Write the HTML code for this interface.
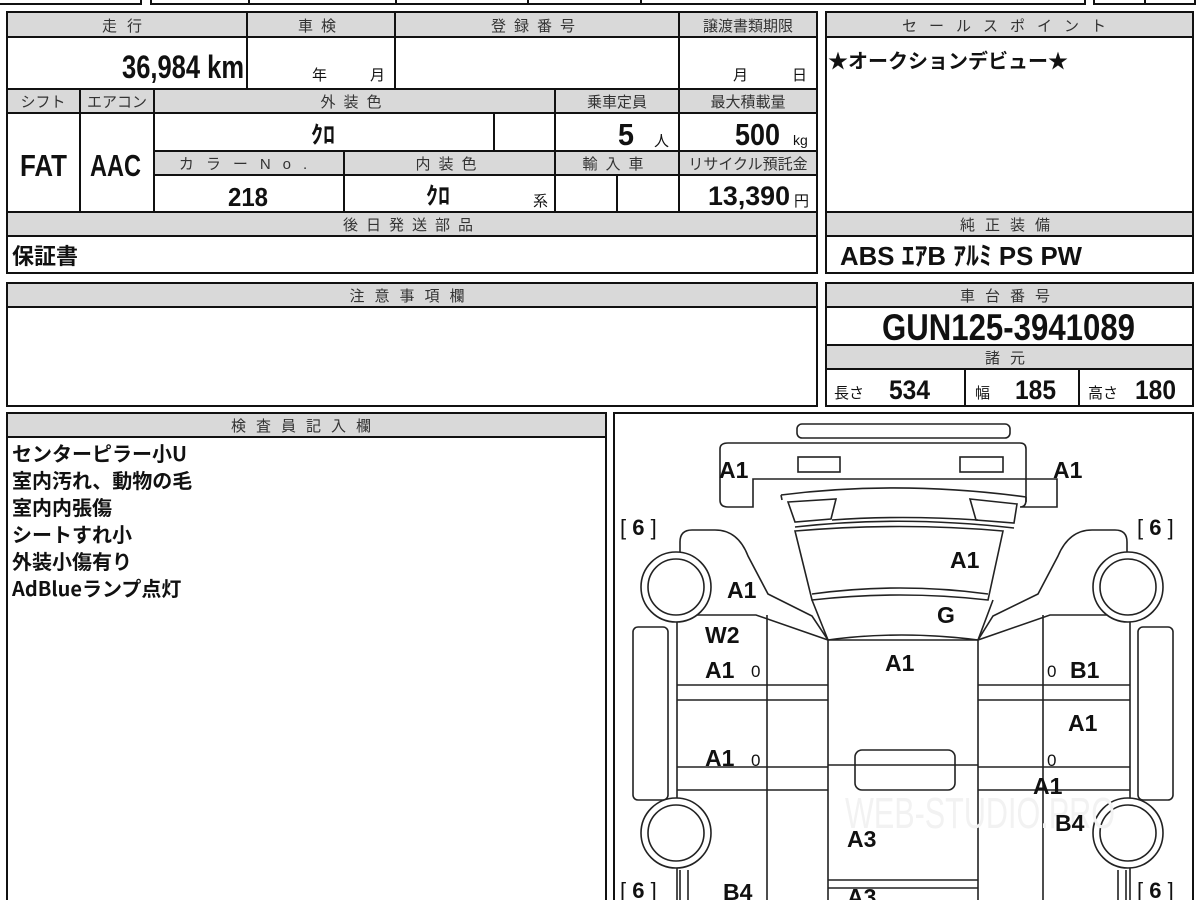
<!DOCTYPE html>
<html><head><meta charset="utf-8"><style>
html,body{margin:0;padding:0;background:#fff;width:1200px;height:900px;overflow:hidden}
svg{display:block}
text{font-family:"Liberation Sans","Noto Sans CJK JP",sans-serif;fill:#111}
.h{font-size:15px;fill:#333;text-anchor:middle;letter-spacing:5px}
.b{font-weight:bold}
.c{text-anchor:middle}
.r{text-anchor:end}
.jp{font-family:"Noto Sans CJK JP",sans-serif}
</style></head><body>
<svg width="1200" height="900" viewBox="0 0 1200 900" xmlns="http://www.w3.org/2000/svg">
<defs><clipPath id="dg"><rect x="615" y="414" width="577" height="486"/></clipPath></defs>
<g fill="none" stroke="#111" stroke-width="2">
<path d="M0 4H141V-2M151 -2V4H1085V-2M249 4V-2M396 4V-2M528 4V-2M641 4V-2M1094 -2V4H1195V-2M1145 4V-2"/>
</g>
<g fill="#d9d9d9">
<rect x="7" y="12" width="810" height="25"/>
<rect x="7" y="89" width="810" height="24"/>
<rect x="154" y="151" width="663" height="24"/>
<rect x="7" y="212" width="810" height="24"/>
<rect x="826" y="12" width="367" height="25"/>
<rect x="826" y="212" width="367" height="24"/>
<rect x="826" y="283" width="367" height="24"/>
<rect x="826" y="345" width="367" height="24"/>
<rect x="7" y="283" width="810" height="24"/>
<rect x="7" y="413" width="599" height="24"/>
</g>
<g fill="none" stroke="#111" stroke-width="2">
<rect x="7" y="12" width="810" height="261"/>
<path d="M7 37H817M7 89H817M7 113H817M154 151H817M154 175H817M7 212H817M7 236H817"/>
<path d="M247 12V89M395 12V89M679 12V212M80 89V212M154 89V212M555 89V212M494 113V151M344 151V212M617 175V212"/>
<rect x="826" y="12" width="367" height="261"/>
<path d="M826 37H1193M826 212H1193M826 236H1193"/>
<rect x="826" y="283" width="367" height="123"/>
<path d="M826 307H1193M826 345H1193M826 369H1193M965 369V406M1079 369V406"/>
<rect x="7" y="283" width="810" height="123"/>
<path d="M7 307H817"/>
<rect x="7" y="413" width="599" height="500"/>
<path d="M7 437H606"/>
<rect x="614" y="413" width="579" height="500"/>
</g>
<text class="h" x="127" y="31" style="letter-spacing:10px">走行</text>
<text class="h" x="321" y="31" style="letter-spacing:8px">車検</text>
<text class="h" x="537" y="31" style="letter-spacing:8px">登録番号</text>
<text class="h" x="748" y="31" style="letter-spacing:0">譲渡書類期限</text>
<text class="h" x="43" y="107" style="letter-spacing:0">シフト</text>
<text class="h" x="117" y="107" style="letter-spacing:0">エアコン</text>
<text class="h" x="355" y="107" style="letter-spacing:8px">外装色</text>
<text class="h" x="617" y="107" style="letter-spacing:0">乗車定員</text>
<text class="h" x="748" y="107" style="letter-spacing:0">最大積載量</text>
<text class="h" x="249" y="169" style="letter-spacing:12px">カラーNo.</text>
<text class="h" x="450" y="169" style="letter-spacing:8px">内装色</text>
<text class="h" x="617" y="169" style="letter-spacing:8px">輸入車</text>
<text class="h" x="748" y="169" style="letter-spacing:0">リサイクル預託金</text>
<text class="h" x="412" y="230" style="letter-spacing:8px">後日発送部品</text>
<text class="h" x="1010" y="31" style="letter-spacing:12px">セールスポイント</text>
<text class="h" x="1010" y="230" style="letter-spacing:10px">純正装備</text>
<text class="h" x="1010" y="301" style="letter-spacing:10px">車台番号</text>
<text class="h" x="1010" y="363" style="letter-spacing:10px">諸元</text>
<text class="h" x="412" y="301" style="letter-spacing:10px">注意事項欄</text>
<text class="h" x="306" y="431" style="letter-spacing:10px">検査員記入欄</text>
<text class="b" x="122" y="78" style="font-size:32px" textLength="122" lengthAdjust="spacingAndGlyphs">36,984 km</text>
<text x="312" y="80" style="font-size:15px">年</text>
<text x="370" y="80" style="font-size:15px">月</text>
<text x="733" y="80" style="font-size:15px">月</text>
<text x="792" y="80" style="font-size:15px">日</text>
<text class="b" x="20" y="176" style="font-size:31px" textLength="47" lengthAdjust="spacingAndGlyphs">FAT</text>
<text class="b" x="90" y="176" style="font-size:31px" textLength="51" lengthAdjust="spacingAndGlyphs">AAC</text>
<text class="b c" x="323" y="143" style="font-size:24px">ｸﾛ</text>
<text class="b" x="618" y="145" style="font-size:31px" textLength="16" lengthAdjust="spacingAndGlyphs">5</text>
<text x="654" y="146" style="font-size:15px">人</text>
<text class="b" x="735" y="145" style="font-size:31px" textLength="45" lengthAdjust="spacingAndGlyphs">500</text>
<text x="793" y="145" style="font-size:14px">kg</text>
<text class="b" x="228" y="206" style="font-size:26px" textLength="40" lengthAdjust="spacingAndGlyphs">218</text>
<text class="b c" x="438" y="204" style="font-size:24px">ｸﾛ</text>
<text x="533" y="206" style="font-size:15px">系</text>
<text class="b" x="708" y="205" style="font-size:27px" textLength="82" lengthAdjust="spacingAndGlyphs">13,390</text>
<text x="794" y="206" style="font-size:15px">円</text>
<text class="b jp" x="12" y="264" style="font-size:22px">保証書</text>
<text class="b jp" x="828" y="68" style="font-size:20px">★オークションデビュー★</text>
<text class="b" x="840" y="265" style="font-size:26px" textLength="242" lengthAdjust="spacingAndGlyphs">ABS  ｴｱB  ｱﾙﾐ  PS  PW</text>
<text class="b" x="882" y="340" style="font-size:37px" textLength="253" lengthAdjust="spacingAndGlyphs">GUN125-3941089</text>
<text x="834" y="398" style="font-size:15px">長さ</text>
<text class="b" x="889" y="399" style="font-size:27px" textLength="41" lengthAdjust="spacingAndGlyphs">534</text>
<text x="975" y="398" style="font-size:15px">幅</text>
<text class="b" x="1015" y="399" style="font-size:27px" textLength="41" lengthAdjust="spacingAndGlyphs">185</text>
<text x="1088" y="398" style="font-size:15px">高さ</text>
<text class="b" x="1135" y="399" style="font-size:27px" textLength="41" lengthAdjust="spacingAndGlyphs">180</text>
<text class="jp b" x="12" y="461" style="font-size:20px">センターピラー小U</text>
<text class="jp b" x="12" y="488" style="font-size:20px">室内汚れ、動物の毛</text>
<text class="jp b" x="12" y="515" style="font-size:20px">室内内張傷</text>
<text class="jp b" x="12" y="542" style="font-size:20px">シートすれ小</text>
<text class="jp b" x="12" y="569" style="font-size:20px">外装小傷有り</text>
<text class="jp b" x="12" y="596" style="font-size:20px">AdBlueランプ点灯</text>
<g clip-path="url(#dg)">
<g fill="none" stroke="#222" stroke-width="1.6">
<rect x="797" y="424" width="213" height="14" rx="5"/>
<path d="M728 443H1020Q1026 443 1026 449V500Q1026 507 1020 507H1057V479H753V507H728Q720 507 720 500V449Q720 443 728 443Z"/>
<rect x="798" y="457" width="42" height="15"/><rect x="960" y="457" width="43" height="15"/>
<path d="M781 495Q900 480 1026 497M782 500L781 495M1026 497V502"/>
<path d="M788 502L836 499L831 519L795 522ZM970 499L1017 504L1014 523L976 520Z"/>
<path d="M832 520Q900 515 978 520M795 527Q900 515 1014 528"/>
<path d="M795 531Q900 522 1003 531L988 600Q900 590 812 600Z"/>
<path d="M812 594Q900 582 988 594"/>
<path d="M812 600L828 640H978L993 600"/>
<path d="M828 640Q900 630 978 640"/>
<path d="M828 640V900M978 640V900"/>
<path d="M680 573V542Q680 530 692 530H715Q738 530 748 556L768 594L812 616L828 640"/>
<path d="M1127 573V542Q1127 530 1115 530H1092Q1069 530 1058 556L1038 594L993 616L978 640"/>
<path d="M677 615H756L828 640M1130 615H1050L978 640"/>
<path d="M677 615V900M767 615V900M1130 615V900M1043 615V900"/>
<path d="M677 685H828M677 700H828M677 767H828M677 790H828M978 685H1130M978 700H1130M978 767H1130M978 790H1130"/>
<path d="M828 765H978M828 880H978M828 888H978"/>
<rect x="855" y="750" width="100" height="40" rx="7"/>
<rect x="633" y="627" width="35" height="173" rx="5" fill="#fff"/>
<rect x="1138" y="627" width="35" height="173" rx="5" fill="#fff"/>
<path d="M680 870V900M688 870V900M1118 870V900M1126 870V900"/>
</g>
<g fill="#fff" stroke="#222" stroke-width="1.6">
<circle cx="676" cy="587" r="35"/><circle cx="676" cy="587" r="28"/>
<circle cx="1128" cy="587" r="35"/><circle cx="1128" cy="587" r="28"/>
<circle cx="676" cy="833" r="35"/><circle cx="676" cy="833" r="28"/>
<circle cx="1128" cy="833" r="35"/><circle cx="1128" cy="833" r="28"/>
</g>
<text x="845" y="828" style="font-size:44px;fill:#f2f2f2" textLength="270" lengthAdjust="spacingAndGlyphs">WEB-STUDIO.PRO</text>
</g>
<g style="font-size:23px;font-weight:bold">
<text class="b" x="719" y="478">A1</text>
<text class="b" x="1053" y="478">A1</text>
<text class="b" x="727" y="598">A1</text>
<text class="b" x="950" y="568">A1</text>
<text class="b" x="937" y="623">G</text>
<text class="b" x="705" y="643">W2</text>
<text class="b" x="705" y="678">A1</text>
<text class="b" x="885" y="671">A1</text>
<text class="b" x="1070" y="678">B1</text>
<text class="b" x="1068" y="731">A1</text>
<text class="b" x="705" y="766">A1</text>
<text class="b" x="1033" y="794">A1</text>
<text class="b" x="1055" y="831">B4</text>
<text class="b" x="847" y="847">A3</text>
<text class="b" x="723" y="900">B4</text>
<text class="b" x="847" y="905">A3</text>
</g>
<g style="font-size:17px">
<text x="751" y="677">0</text><text x="1047" y="677">0</text>
<text x="751" y="766">0</text><text x="1047" y="766">0</text>
</g>
<g style="font-size:22px">
<text x="620" y="535">[ <tspan class="b">6</tspan> ]</text>
<text x="1137" y="535">[ <tspan class="b">6</tspan> ]</text>
<text x="620" y="898">[ <tspan class="b">6</tspan> ]</text>
<text x="1137" y="898">[ <tspan class="b">6</tspan> ]</text>
</g>
</svg>
</body></html>
